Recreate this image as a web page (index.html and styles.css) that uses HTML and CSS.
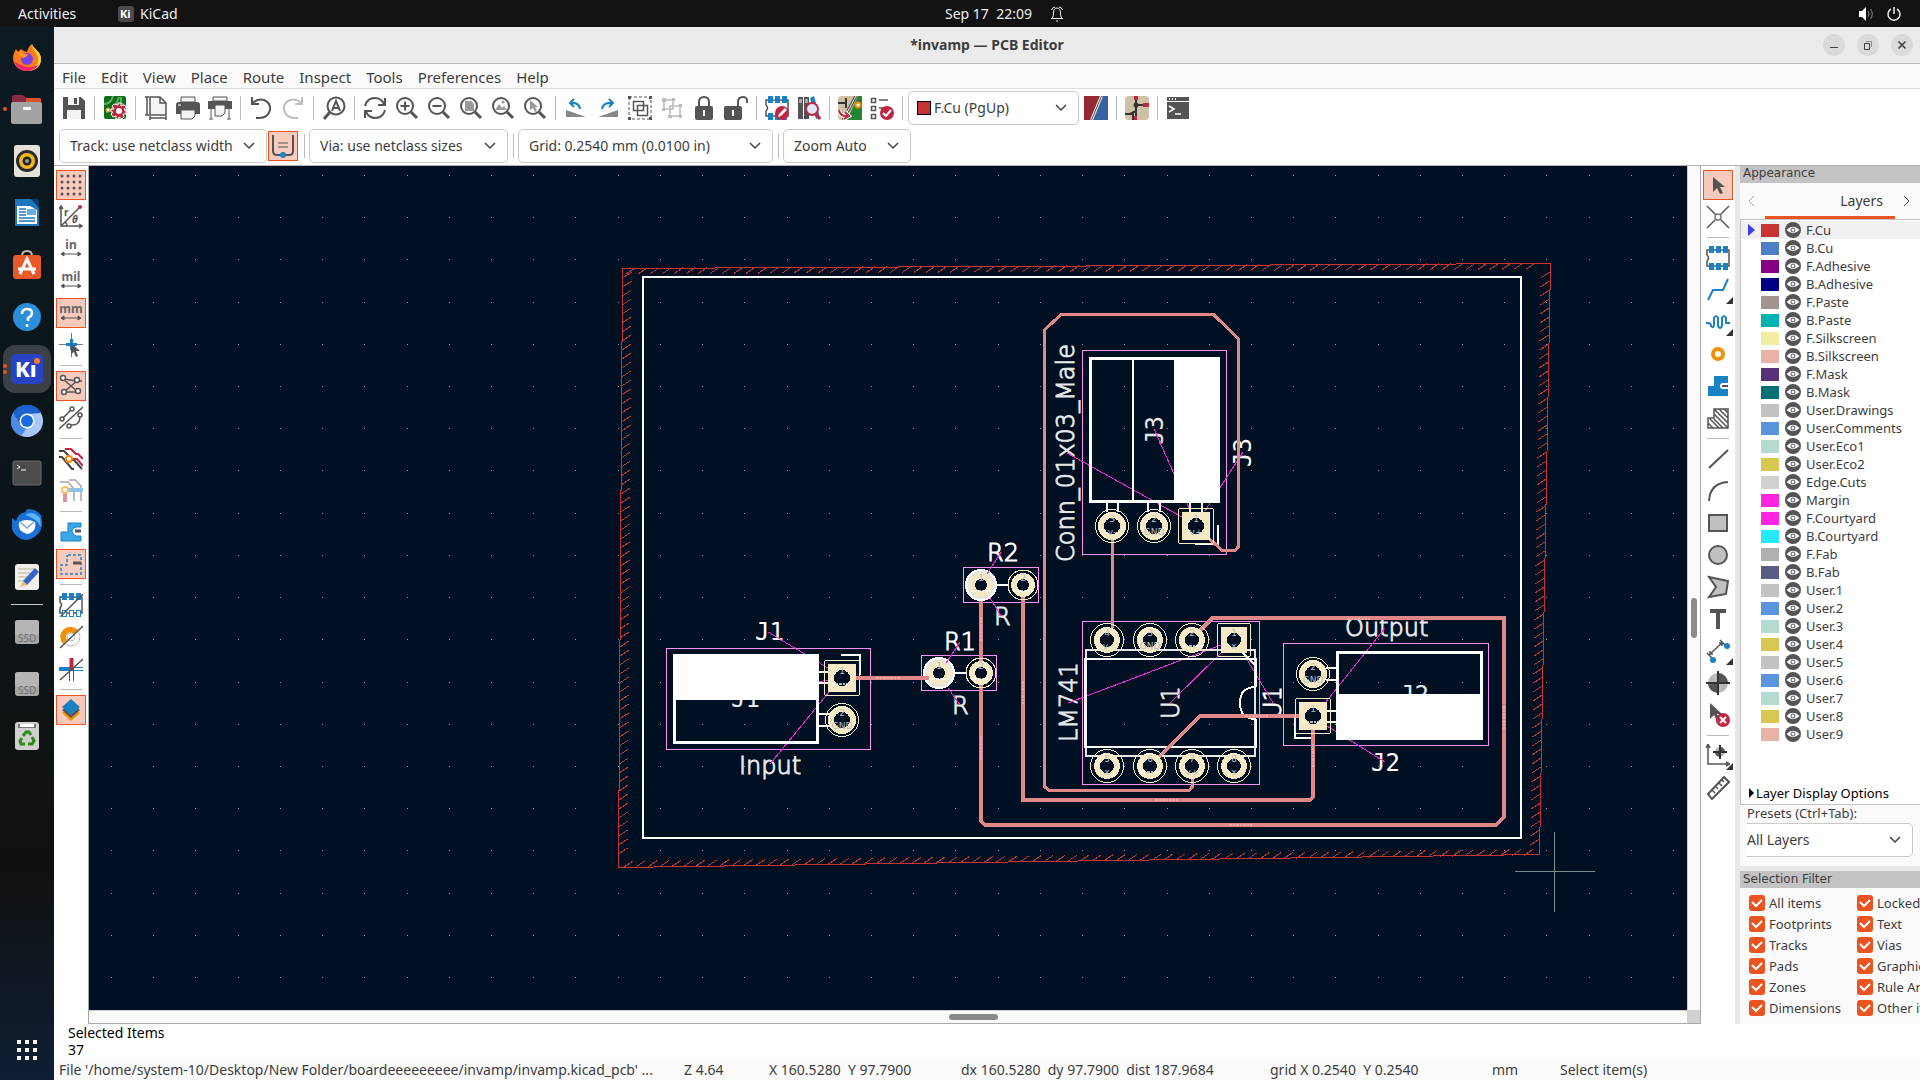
FILE: index.html
```html
<!DOCTYPE html>
<html lang="en">
<head>
<meta charset="utf-8">
<title>*invamp — PCB Editor</title>
<link rel="stylesheet" href="styles.css">
</head>
<body>
<svg class="defs" aria-hidden="true">
  <symbol id="eye" viewBox="0 0 16 16"><circle cx="8" cy="8" r="8" fill="#545454"/><path d="M1.500 8Q8 1.500 14.500 8Q8 14.500 1.500 8Z" fill="#fff"/><circle cx="8" cy="8" r="2" fill="#fff" stroke="#545454"/></symbol>
  <symbol id="lens" viewBox="0 0 24 24"><circle cx="10" cy="10" r="8" fill="#fff" stroke="#545454" stroke-width="2"/><path d="M16 16l6 6" stroke="#545454" stroke-width="3"/></symbol>
  <symbol id="chip" viewBox="0 0 24 24"><path d="M1 4h22v16H1v-5q3-3 0-6z" fill="#fff" stroke="#545454" stroke-width="1.500"/><path d="M3 0h5v7H3zM10 0h5v7h-5zM17 0h5v7h-5zM3 17h5v7H3zM10 17h5v7h-5zM17 17h5v7h-5z" fill="#1a81c4"/></symbol>
  <symbol id="arrow" viewBox="0 0 24 24"><path d="M7 4v15l4-4 3 6 3-1-3-6h5z" fill="#545454"/></symbol>
</svg>

<header class="topbar">
  <button class="activities">Activities</button>
  <span class="app"><svg width="16" height="16" viewBox="0 0 16 16"><rect width="16" height="16" rx="3" fill="#4a4a4a"/><text x="2" y="12" font-size="11" font-weight="700" fill="#fff">Ki</text></svg>KiCad</span>
  <span class="clock">Sep 17&nbsp; 22:09<svg width="16" height="16" viewBox="0 0 16 16" fill="none" stroke="#eee"><path d="M2 12.500h12M3.500 12q1-2 1-5Q4.500 2 8 2t3.500 5q0 3 1 5M7 15h2M2.500 4Q3.500 1 6 1M13.500 4Q12.500 1 10 1"/></svg></span>
  <span class="system"><svg width="16" height="16" viewBox="0 0 16 16"><path d="M1 5h3l4-4v14l-4-4H1z" fill="#fff"/><path d="M10 5q2 3 0 6M12.500 3q3.500 5 0 10" fill="none" stroke="#888"/></svg><svg width="16" height="16" viewBox="0 0 16 16"><path d="M5 3a6 6 0 1 0 6 0M8 1v7" fill="none" stroke="#eee" stroke-width="1.500"/></svg></span>
</header>

<div class="desktop">
<nav class="dock" aria-label="Dock">
  <button title="Firefox"><svg viewBox="0 0 32 32"><path d="M16 30C8 30 2 24 2 17c0-4 2-7 3-9l2 3 3-3 3 2 3 1c1-4 3-7 5-8 1 5 9 7 9 15s-6 12-14 12z" fill="#ff7a1c"/><path d="M21 3c1 5 9 7 9 15s-6 12-14 12c6-1 11-5 11-12 0-6-6-8-6-15z" fill="#ffd335"/><path d="M3 20q3 10 13 10 8 0 12-7-5 4-12 3T3 20z" fill="#f0246f"/><circle cx="16" cy="18" r="6" fill="#7542e5"/><path d="M6 10q5 4 11 3-1 3-5 4-3-1-6-7z" fill="#ff9a28"/></svg></button>
  <button title="Files" class="one"><svg viewBox="0 0 32 32"><path d="M1 4q0-2 2-2h9l3 3h13q2 0 2 2v6H1z" fill="#8a2b45"/><path d="M15 5h13q2 0 2 2v5H15z" fill="#d8552c"/><rect y="9" width="31" height="22" rx="2" fill="#a3a3a3"/><rect x="12" y="14" width="8" height="3" rx="1" fill="#fff"/></svg></button>
  <button title="Rhythmbox"><svg viewBox="0 0 32 32"><rect x="3" width="26" height="32" rx="3" fill="#e5e2da"/><circle cx="16" cy="16" r="11" fill="#2b2b2b"/><circle cx="16" cy="16" r="8" fill="#f2b91d"/><circle cx="16" cy="16" r="4.500" fill="#222"/><circle cx="16" cy="16" r="2" fill="#999"/></svg></button>
  <button title="LibreOffice Writer"><svg viewBox="0 0 32 32"><path d="M4 2h17l7 8v19H4z" fill="#1b76bc"/><path d="M6 9h13l7 4v14H6z" fill="#fff"/><path d="M20 2h8v9z" fill="#0c3c66"/><path d="M8 12h7M8 15h7M8 18h7M8 21h16M8 24h16" stroke="#1b76bc" stroke-width="1.500"/><path d="M16 12h9v6h-9z" fill="#68aee0"/></svg></button>
  <button title="Ubuntu Software"><svg viewBox="0 0 32 32"><path d="M11 7q0-5 5-5t5 5" fill="none" stroke="#c9b9a0" stroke-width="2"/><rect x="2" y="6" width="28" height="24" rx="3" fill="#e9582b"/><path d="M9 25l7-15 7 15M7 20h18" fill="none" stroke="#fff" stroke-width="3"/></svg></button>
  <button title="Help"><svg viewBox="0 0 32 32"><circle cx="16" cy="16" r="14" fill="#2a8fd8"/><path d="M11 13q0-5 5-5t5 4q0 3-4 5v3M16 23v3" fill="none" stroke="#fff" stroke-width="2.500"/></svg></button>
  <button title="KiCad" class="two"><svg viewBox="0 0 32 32"><rect y="1" width="32" height="30" rx="5" fill="#2743c4"/><text x="4" y="24" font-size="22" font-weight="800" fill="#fff">Kı</text><circle cx="26" cy="8" r="3" fill="#ff7b22"/></svg></button>
  <button title="Chromium"><svg viewBox="0 0 32 32"><circle cx="16" cy="16" r="16" fill="#a9c8fa"/><path d="M2 8a16 16 0 0 1 28 0L16 9 9 20z" fill="#1a62cf"/><path d="M2 8l7 12 7 3-6 8A16 16 0 0 1 2 8z" fill="#4c8be8"/><circle cx="16" cy="16" r="7.500" fill="#fff"/><circle cx="16" cy="16" r="6" fill="#1a6be0"/></svg></button>
  <button title="Terminal"><svg viewBox="0 0 32 32"><rect x="2" y="4" width="28" height="24" rx="2" fill="#4b4b4b" stroke="#6c6c6c"/><path d="M6 8l3 2-3 2M10 13h5" fill="none" stroke="#fff"/></svg></button>
  <button title="Thunderbird"><svg viewBox="0 0 32 32"><path d="M1 9l4 3q2-8 10-9-1-2 2-3 8 0 13 6 3 12-3 19-6 6-13 6Q4 29 1 20z" fill="#1c6fd6"/><path d="M14 6q8-5 15 3l1 9q-5-9-16-12z" fill="#5bb4f5"/><path d="M8 13q8-4 16 0 2 10-8 12-10-3-8-12z" fill="#fff"/><path d="M9 13l7 6 7-6" fill="none" stroke="#7aa7d8" stroke-width="1.500"/></svg></button>
  <button title="Text Editor"><svg viewBox="0 0 32 32"><rect x="4" y="3" width="24" height="26" rx="3" fill="#f0efeb"/><path d="M7 8h16M7 12h12M7 16h10M7 20h6" stroke="#b9b29d"/><path d="M12 20L24 7l4 4-12 13z" fill="#3664c9"/><path d="M12 20l4 4-7 2z" fill="#e9bd76"/></svg></button>
  <hr>
  <button title="SSD volume"><svg viewBox="0 0 32 32"><rect x="4" y="4" width="24" height="24" rx="3" fill="#a5a5a5"/><rect x="4" y="4" width="24" height="15" rx="3" fill="#b5b5b5"/><text x="7" y="26" font-size="10" fill="#707070">SSD</text></svg></button>
  <button title="Second SSD volume"><svg viewBox="0 0 32 32"><rect x="4" y="4" width="24" height="24" rx="3" fill="#a5a5a5"/><rect x="4" y="4" width="24" height="15" rx="3" fill="#b5b5b5"/><text x="7" y="26" font-size="10" fill="#707070">SSD</text></svg></button>
  <button title="Trash"><svg viewBox="0 0 32 32"><rect x="4" y="2" width="24" height="28" rx="3" fill="#cfcfcf"/><path d="M7 4h18v4H7z" fill="#777"/><path d="M9 4h14v3H9z" fill="#fff"/><path d="M12 16l3-4h3l2 3M21 17l2 4-2 3h-4M14 24h-4l-1-3 2-3" fill="none" stroke="#2c8a1c" stroke-width="3"/></svg></button>
  <button title="Show Applications" class="apps"><svg viewBox="0 0 32 32" fill="#fff"><path d="M6 6h4v4H6zM14 6h4v4h-4zM22 6h4v4h-4zM6 14h4v4H6zM14 14h4v4h-4zM22 14h4v4h-4zM6 22h4v4H6zM14 22h4v4h-4zM22 22h4v4h-4z"/></svg></button>
</nav>

<div class="window">
  <div class="titlebar">
    <h1>*invamp — PCB Editor</h1>
    <div class="controls">
      <button title="Minimize"><svg viewBox="0 0 22 22"><path d="M7 13.500h8"/></svg></button>
      <button title="Restore"><svg viewBox="0 0 22 22"><path d="M7.500 9.500h5v6h-5z"/><path d="M9 7.500h5.500V13" stroke="#888"/></svg></button>
      <button title="Close"><svg viewBox="0 0 22 22"><path d="M7.500 7.500l7 7M14.500 7.500l-7 7" stroke-width="1.500"/></svg></button>
    </div>
  </div>
  <nav class="menubar"><button>File</button><button>Edit</button><button>View</button><button>Place</button><button>Route</button><button>Inspect</button><button>Tools</button><button>Preferences</button><button>Help</button></nav>

  <div class="toolbars">
    <div class="bar">
      <button class="tool" title="Save"><svg viewBox="0 0 24 24"><path d="M1 1h18l4 4v18H1z" fill="#545454"/><path d="M6 1h11v8H6zM5 14h14v9H5z" fill="#f4f4f4"/><path d="M12 2h3v6h-3z" fill="#545454"/></svg></button>
      <i class="sep"></i>
      <button class="tool" title="Board Setup"><svg viewBox="0 0 24 24"><rect x="1" width="22" height="23" rx="2" fill="#0d6e1c"/><path d="M1 8q7 0 9-8M3 16q9-2 13-15M18 1v6l5 3" fill="none" stroke="#63ad5f" stroke-width="2"/><circle cx="5" cy="14" r="2" fill="#fff" stroke="#f29100"/><path d="M15 7h3v3l3-1 2 2-2 3h2v4h-3l1 3-2 2-3-2v2h-3v-3l-3 1-2-3 2-2H8v-3h3l-2-3 2-2 4 1z" fill="#bf2641" stroke="#fff"/><circle cx="16" cy="15" r="3" fill="#fff"/></svg></button>
      <i class="sep"></i>
      <button class="tool" title="Page Settings"><svg viewBox="0 0 24 24" fill="none" stroke="#545454" stroke-width="1.500"><path d="M6 1h10l6 6v12H6z" fill="#f4f4f4"/><path d="M16 1v6h6M3 1v18M1 1h4M1 19h4M6 22h16M6 20v4M22 20v4"/></svg></button>
      <button class="tool" title="Print"><svg viewBox="0 0 24 24"><path d="M5 1h14v5H5z" fill="#f4f4f4" stroke="#545454"/><path d="M3 6h18q3 0 3 3v9H0V9q0-3 3-3z" fill="#545454"/><path d="M5 14h14v6l-3 3H5z" fill="#f4f4f4" stroke="#545454"/><path d="M2 9h3" stroke="#fff"/></svg></button>
      <button class="tool" title="Plot"><svg viewBox="0 0 24 24"><path d="M5 1h14v4H5z" fill="#f4f4f4" stroke="#545454"/><path d="M0 5h24v8H0z" fill="#545454"/><path d="M7 9h10v8l-3 3H7z" fill="#f4f4f4" stroke="#545454"/><path d="M3 13v10M21 13v10M1 23h4M19 23h4" stroke="#545454"/></svg></button>
      <i class="sep"></i>
      <button class="tool" title="Undo"><svg viewBox="0 0 24 24" fill="none" stroke="#545454" stroke-width="2"><path d="M3 1v7h7M3 8q5-6 12-4 7 3 6 10-2 8-11 8H7"/></svg></button>
      <button class="tool" title="Redo"><svg viewBox="0 0 24 24" fill="none" stroke="#bdbdbd" stroke-width="2"><path d="M21 1v7h-7M21 8q-5-6-12-4-7 3-6 10 2 8 11 8h3"/></svg></button>
      <i class="sep"></i>
      <button class="tool" title="Find"><svg viewBox="0 0 24 24"><circle cx="14" cy="10" r="8.500" fill="#fff" stroke="#545454" stroke-width="2"/><path d="M8 16l-6 7" stroke="#545454" stroke-width="3"/><path d="M10 15l4-10 4 10M11.500 12h5" fill="none" stroke="#545454" stroke-width="2"/></svg></button>
      <i class="sep"></i>
      <button class="tool" title="Refresh"><svg viewBox="0 0 24 24" fill="none" stroke="#545454" stroke-width="2"><path d="M2 10Q4 2 12 2q6 0 9 6M22 2v7h-7M22 14q-2 8-10 8-6 0-9-6M2 22v-7h7"/></svg></button>
      <button class="tool" title="Zoom In"><svg viewBox="0 0 24 24"><use href="#lens"/><path d="M10 5.500v9M5.500 10h9" stroke="#545454" stroke-width="2"/></svg></button>
      <button class="tool" title="Zoom Out"><svg viewBox="0 0 24 24"><use href="#lens"/><path d="M5.500 10h9" stroke="#545454" stroke-width="2"/></svg></button>
      <button class="tool" title="Zoom to Fit"><svg viewBox="0 0 24 24"><use href="#lens"/><path d="M6 5h6l3 3v7H6z" fill="#9a9a9a"/></svg></button>
      <button class="tool" title="Zoom to Objects"><svg viewBox="0 0 24 24"><use href="#lens"/><path d="M4 14l4-6 3 4 2-2 3 4z" fill="#9a9a9a"/><circle cx="12" cy="6" r="1.500" fill="#9a9a9a"/></svg></button>
      <button class="tool" title="Zoom to Selection"><svg viewBox="0 0 24 24"><use href="#lens"/><path d="M7 4v10l3-2 2 4 2-1-2-4h3z" fill="#9a9a9a"/></svg></button>
      <i class="sep"></i>
      <button class="tool" title="Rotate Counterclockwise"><svg viewBox="0 0 24 24"><path d="M2 14l20 7H2z" fill="#888"/><path d="M10 3L6 7l4 4M6 7q9-1 10 6" fill="none" stroke="#1a81c4" stroke-width="2"/></svg></button>
      <button class="tool" title="Rotate Clockwise"><svg viewBox="0 0 24 24"><path d="M22 14v7H2z" fill="#888"/><path d="M13 3l4 4-4 4M17 7q-10-1-11 6" fill="none" stroke="#1a81c4" stroke-width="2"/></svg></button>
      <button class="tool" title="Group"><svg viewBox="0 0 24 24" fill="none" stroke="#545454"><path d="M1 1h22v22H1z" stroke-dasharray="3 2"/><path d="M5.500 5.500h10v9h-10zM9.500 9.500h10v10h-10z" stroke-width="1.500"/><path d="M0 0h3v3H0zM21 0h3v3h-3zM0 21h3v3H0zM21 21h3v3h-3z" fill="#545454" stroke="none"/></svg></button>
      <button class="tool" title="Ungroup"><svg viewBox="0 0 24 24" fill="none" stroke="#bbb" stroke-width="1.500"><path d="M4 4h9v9H4zM10 10h10v10H10z"/><path d="M2 2h4v4H2zM12 2h3v3h-3zM2 12h3v3H2zM8 19h4v3H8zM19 8h3v3h-3zM19 19h3v3h-3z" fill="#bbb" stroke="none"/></svg></button>
      <button class="tool" title="Lock"><svg viewBox="0 0 24 24"><path d="M7 11V6q0-5 5-5t5 5v5" fill="none" stroke="#545454" stroke-width="2"/><rect x="3" y="10" width="18" height="14" rx="2" fill="#545454"/><path d="M12 14v6" stroke="#fff" stroke-width="2"/></svg></button>
      <button class="tool" title="Unlock"><svg viewBox="0 0 24 24"><path d="M14 11V6q0-5 5-5t4 6" fill="none" stroke="#545454" stroke-width="2"/><rect y="10" width="18" height="14" rx="2" fill="#545454"/><path d="M9 14v6" stroke="#fff" stroke-width="2"/></svg></button>
      <i class="sep"></i>
      <button class="tool" title="Footprint Editor"><svg viewBox="0 0 24 24"><use href="#chip"/><circle cx="17" cy="17" r="7" fill="#bf2641"/><path d="M13 21l1-3 6-6 2 2-6 6z" fill="#fff"/></svg></button>
      <button class="tool" title="Footprint Libraries"><svg viewBox="0 0 24 24"><path d="M1 1h5v22H1zM7 1h5v22H7z" fill="#545454"/><path d="M13 2l4-2 6 22-4 1z" fill="#1a81c4"/><path d="M2 4h3M2 6h3M8 4h3M8 6h3" stroke="#fff"/><circle cx="15" cy="13" r="6" fill="#dceaf5" stroke="#bf2641" stroke-width="2"/><path d="M19 18l4 5" stroke="#bf2641" stroke-width="3"/></svg></button>
      <i class="sep"></i>
      <button class="tool" title="Update from Schematic"><svg viewBox="0 0 24 24"><rect width="24" height="24" rx="4" fill="#cfc1a5"/><path d="M20 0h4v24H9z" fill="#278434"/><path d="M18 0L5 24" stroke="#444" stroke-width="3"/><path d="M18 0L5 24" stroke="#fff"/><path d="M0 7h8M8 2v10" stroke="#333" stroke-width="2"/><circle cx="20" cy="9" r="2.500" fill="#fff" stroke="#f29100" stroke-width="2"/><path d="M1 14q1 7 9 6M7 16l4 4-5 3" fill="none" stroke="#fff" stroke-width="4"/><path d="M1 14q1 7 9 6M7 16l4 4-5 3" fill="none" stroke="#bf2641" stroke-width="2"/></svg></button>
      <button class="tool" title="Design Rules Checker"><svg viewBox="0 0 24 24"><path d="M1.500 2.500h4v4h-4zM1.500 10.500h4v4h-4zM1.500 18.500h4v4h-4zM9 4h9M9 12h5" fill="none" stroke="#545454" stroke-width="1.500"/><circle cx="17" cy="17" r="7" fill="#bf2641"/><path d="M13 17l3 3 5-6" fill="none" stroke="#fff" stroke-width="2"/></svg></button>
      <i class="sep"></i>
      <span class="layerpick"><span class="chip"></span><select aria-label="Active layer" class="w-layer"><option>F.Cu (PgUp)</option></select></span>
      <button class="tool" title="Layer Pair"><svg viewBox="0 0 24 24"><path d="M0 0h24v24H0z" fill="#38629f"/><path d="M0 0h18L7 24H0z" fill="#962831"/><path d="M17.500 0l-10 24" stroke="#eee" stroke-width="3"/><path d="M17.500 0l-10 24" stroke="#555"/></svg></button>
      <i class="sep"></i>
      <button class="tool" title="Open Schematic"><svg viewBox="0 0 24 24"><rect width="24" height="24" rx="4" fill="#cfc1a5"/><path d="M11 0v9M11 9v6l-6 3M11 9h7M0 18h8v6M11 15v9" fill="none" stroke="#333" stroke-width="2"/><circle cx="11" cy="9" r="2.500" fill="#333"/><path d="M9 0h4v4H9zM18 7h6v4h-6zM9 20h3v4H9z" fill="#bf2641"/></svg></button>
      <i class="sep"></i>
      <button class="tool" title="Scripting Console"><svg viewBox="0 0 24 24"><path d="M1 1h22v4H1zM1 6h22v17H1z" fill="#545454"/><path d="M3 3h1M6 3h1M9 3h1" stroke="#fff" stroke-width="2"/><path d="M3 10l5 3-5 3M9 18h6" fill="none" stroke="#fff" stroke-width="1.500"/></svg></button>
    </div>
    <div class="bar second">
      <select aria-label="Track width" class="w-track"><option>Track: use netclass width</option></select>
      <button class="tool on" title="Use existing track width"><svg viewBox="0 0 24 24" fill="none" stroke="#545454" stroke-width="2"><path d="M2 1v16q0 4 4 4h12q4 0 4-4V1"/><path d="M7 9h10M7 13h10" stroke-width="1"/><circle cx="12" cy="21" r="3" fill="#1a81c4" stroke="none"/></svg></button>
      <i class="sep"></i>
      <select aria-label="Via size" class="w-via"><option>Via: use netclass sizes</option></select>
      <i class="sep"></i>
      <select aria-label="Grid" class="w-grid"><option>Grid: 0.2540 mm (0.0100 in)</option></select>
      <i class="sep"></i>
      <select aria-label="Zoom" class="w-zoom"><option>Zoom Auto</option></select>
    </div>
  </div>

  <main class="work">
    <div class="side">
      <button class="tool on" title="Show grid"><svg viewBox="0 0 24 24"><path d="M3 3h19M3 9h19M3 15h19M3 21h19" stroke="#545454" stroke-width="3" stroke-linecap="round" stroke-dasharray="0 6"/></svg></button>
      <button class="tool" title="Polar coordinates"><svg viewBox="0 0 24 24" fill="none" stroke="#545454" stroke-width="1.500"><path d="M2 2v19h21M2 21L20 3M0 4l2-3 2 3M20 19l3 2-3 2M6 17q2 1 2 4"/><circle cx="21" cy="2" r="2" fill="#bf2641" stroke="none"/><text x="5" y="11" font-size="10" font-weight="700" fill="#545454" stroke="none">r</text><text x="13" y="18" font-size="10" font-style="italic" font-weight="700" fill="#545454" stroke="none">θ</text></svg></button>
      <button class="tool unit" title="Inches"><svg viewBox="0 0 24 24"><text x="12" y="12" text-anchor="middle">in</text><path d="M3 17h18M5 15l-3 2 3 2zM19 15l3 2-3 2z"/></svg></button>
      <button class="tool unit" title="Mils"><svg viewBox="0 0 24 24"><text x="12" y="12" text-anchor="middle">mil</text><path d="M3 17h18M5 15l-3 2 3 2zM19 15l3 2-3 2z"/></svg></button>
      <button class="tool unit on" title="Millimeters"><svg viewBox="0 0 24 24"><text x="12" y="12" text-anchor="middle">mm</text><path d="M3 17h18M5 15l-3 2 3 2zM19 15l3 2-3 2z"/></svg></button>
      <button class="tool" title="Full-window crosshairs"><svg viewBox="0 0 24 24"><path d="M0 11.500h24M12.500 0v24" stroke="#777"/><path d="M7 11.500h11M12.500 6v11" stroke="#1a81c4" stroke-width="3"/><path d="M12 10v11l3-2 2 5 2-1-2-5h4z" fill="#545454"/></svg></button>
      <hr>
      <button class="tool on" title="Show ratsnest"><svg viewBox="0 0 24 24" fill="#fff" stroke="#545454" stroke-width="1.500"><path d="M4 5l15 13M5 18L18 7" fill="none"/><path d="M4 5l14 2h5M5 18h14" fill="none"/><circle cx="4" cy="4" r="2.500"/><circle cx="18" cy="6" r="2.500"/><circle cx="5" cy="18" r="2.500"/><circle cx="19" cy="17" r="2.500"/></svg></button>
      <button class="tool" title="Curved ratsnest"><svg viewBox="0 0 24 24" fill="none" stroke="#545454" stroke-width="1.500"><path d="M0 23L24 1M4 12l8-8M12 19q9 1 9-9"/><circle cx="3" cy="13" r="2"/><circle cx="13" cy="3" r="2"/><circle cx="10" cy="20" r="2"/><circle cx="21" cy="9" r="2"/></svg></button>
      <hr>
      <button class="tool" title="High contrast"><svg viewBox="0 0 24 24" fill="none" stroke-width="2"><path d="M0 4h5l5 5M0 10h3l10 12h2M12 13h3l8 9" stroke="#444"/><path d="M6 2h6l5 5h2l5 5M12 12h6l6 7" stroke="#bf2641"/><circle cx="10" cy="12" r="3" fill="#fff" stroke="#f29100"/></svg></button>
      <button class="tool" title="Net highlighting"><svg viewBox="0 0 24 24" fill="none" stroke="#bbb" stroke-width="2"><path d="M1 3h8l6 7v12M10 1h6l6 6v15"/><path d="M7 11h17" stroke="#8cc5ea" stroke-width="4"/><path d="M6 13v10" stroke="#e58e9c" stroke-width="4"/><circle cx="6" cy="11" r="3" fill="#fff" stroke="#f7bd6b"/></svg></button>
      <hr>
      <button class="tool" title="Zone fill"><svg viewBox="0 0 24 24"><path d="M9 3h13v4h-5q-4 1-4 4t4 5h5v5H2v-9h7z" fill="#38a9e4" stroke="#1a81c4"/><path d="M16 11h6" stroke="#545454" stroke-width="3"/></svg></button>
      <button class="tool on" title="Zone outlines"><svg viewBox="0 0 24 24"><path d="M9 3h13v19H2v-9h6V3" fill="none" stroke="#1a81c4" stroke-width="1.500" stroke-dasharray="3 2"/><path d="M14 11h8" stroke="#545454" stroke-width="3"/></svg></button>
      <hr>
      <button class="tool" title="Sketch pads"><svg viewBox="0 0 24 24"><use href="#chip"/><path d="M4 18h3v5H4zM11 18h3v5h-3zM18 18h3v5h-3z" fill="#fff"/><path d="M1 24L24 1" stroke="#545454" stroke-width="1.500"/></svg></button>
      <button class="tool" title="Sketch vias"><svg viewBox="0 0 24 24" fill="none"><circle cx="12" cy="12" r="9" stroke="#bbb"/><path d="M4 19A9 9 0 1 1 19 5l-4 4a4 4 0 0 0-7 6z" fill="#f29100"/><circle cx="12" cy="12" r="4" fill="#fff" stroke="#bbb"/><path d="M1 23L24 1" stroke="#545454" stroke-width="1.500"/></svg></button>
      <button class="tool" title="Sketch tracks"><svg viewBox="0 0 24 24"><path d="M0 12h12" stroke="#1a81c4" stroke-width="4"/><path d="M12 10.500h12M12 13.500h12" stroke="#1a81c4"/><path d="M12.500 1v12" stroke="#bf2641" stroke-width="4"/><path d="M10.500 12v12M14.500 12v12" stroke="#bf2641"/><path d="M1 23L24 2" stroke="#545454" stroke-width="1.500"/></svg></button>
      <hr>
      <button class="tool on" title="Show layers manager"><svg viewBox="0 0 24 24"><path d="M3 15l9-7 9 7-9 8z" fill="#f29100"/><path d="M3 12l9-7 9 7-9 8z" fill="#545454"/><path d="M3 9l9-8 9 8-9 8z" fill="#1a81c4"/></svg></button>
    </div>

    <div class="canvas">
      <svg class="board" viewBox="89 166 1598 844" preserveAspectRatio="xMidYMid slice" role="img" aria-label="Circuit board layout">
        <path id="grid" stroke="#8c969e"/>
        <path id="hatch" fill="none" stroke="#c83434"/>
        <path d="M622.500 268.500L1550.500 263.500 1539.500 854.500 618.500 867.500z" fill="none" stroke="#c83434"/>
        <path d="M643 277h878v561H643z" fill="none" stroke="#fff" stroke-width="2"/>
        <g class="yard"><path d="M666.500 648.500h204v101h-204zM921.500 655.500h75v35h-75zM963.500 567.500h75v35h-75zM1082.500 350.500h144v204h-144zM1082.500 621.500h177v163h-177zM1283.500 643.500h205v102h-205z"/></g>
        <g class="label dim">
          <text x="994" y="625">R</text><text x="952" y="714">R</text>
          <text x="739" y="774">Input</text><text x="1345" y="636">Output</text>
          <text class="mono" x="731" y="707">J1</text><text class="mono" x="1400" y="703">J2</text>
          <text transform="translate(1074 562) rotate(-90)">Conn_01x03_Male</text>
          <text class="mono" transform="translate(1163 445) rotate(-90)">J3</text>
          <text transform="translate(1077 742) rotate(-90)">LM741</text>
          <text transform="translate(1179 719) rotate(-90)">U1</text>
        </g>
        <g class="label">
          <text x="987" y="561">R2</text><text x="944" y="650">R1</text><text class="mono" x="755" y="640">J1</text><text class="mono" x="1371" y="771">J2</text>
          <text class="mono" transform="translate(1251 467) rotate(-90)">J3</text>
          <text transform="translate(1281 719) rotate(-90)">U1</text>
        </g>
        <g class="link"><path d="M1067 453L1182 517M1154 429L1190 510M1243 452L1205 511M1068 703L1221 645M1170 703L1221 653M1243 653L1273 703M1385 628L1325 703M1385 762L1327 726M1325 711h12M768 632L828 668M770 764L829 692M818 682L828 680"/></g>
        <g class="silk">
          <path d="M1086 650h169v106h-169z" stroke="#e6e6e6"/>
          <path d="M1256 719v28h-171v-88h171v28M1256 687q-16 0-16 16t16 16M1243 653l13 13" />
          <path d="M1133 359v141M1107 502v10M1118 502v10M1148 502v10M1160 502v10M1190 502v10M1202 502v10"/>
          <path d="M1090 358h128v143h-128zM1337 652h144v86h-144zM674 655h143v87H674z" stroke-width="3"/>
          <path d="M1218 525v19h-23M1295 718v20h17M841 655h19v20M997 585h11M955 673h12M1326 668h10M1326 680h10M1326 711h10M1326 722h10M818 672h12M818 683h12M818 714h12M818 726h12"/>
          <path d="M1174 357h45v145h-45zM1336 694h146v45h-146zM673 654h145v46H673z" fill="#fff" stroke="none"/>
        </g>
        <g class="track">
          <path stroke-width="3" d="M1196 526L1222 550.500h13l3.500-4V339L1213.500 314.500H1061L1044.500 330V786.500l4.500 4h140l3.500-4V766M1112.500 526V627l-5 12"/>
          <path stroke-width="4" d="M981 585V821l4 4H1496l8-8V617.500H1213L1192 638M1023 585V800h287l3-3V716H1200L1150 766"/>
        </g>
        <g id="pads"></g>
        <path class="track" stroke-width="4" d="M856 678h73"/>
        <g class="link"><path d="M1001 552L987 574M990 598l11 18M960 642L946 663M948 688l12 17"/></g>
        <path stroke="#f2bcbc" stroke-dasharray="3 1 2 1" stroke-width="2" opacity=".6" d="M1347 618.500h23M1245 716h23M1155 800h23M1229 825h23M876 678h24M981 617v24M981 736v24M1023 681v23M1313 744v23M1504 706v23"/>
        <path d="M1515 871.500h80M1554.500 832v80" stroke="#7f878f"/>
      </svg>
      <div class="vscroll"><span></span></div>
      <div class="hscroll"><span></span></div>
      <div class="corner"></div>
    </div>

    <div class="side right">
      <button class="tool on" title="Select"><svg viewBox="0 0 24 24"><use href="#arrow"/></svg></button>
      <button class="tool" title="Local ratsnest"><svg viewBox="0 0 24 24" fill="none" stroke="#545454" stroke-width="1.500"><path d="M1 1l22 22M23 1L1 23"/><circle cx="12" cy="12" r="3" fill="#fff" stroke="#777"/></svg></button>
      <hr>
      <button class="tool" title="Add footprint"><svg viewBox="0 0 24 24"><use href="#chip"/></svg></button>
      <button class="tool more" title="Route tracks"><svg viewBox="0 0 24 24"><path d="M2 22L7 12h10l5-11" fill="none" stroke="#1a81c4" stroke-width="2"/></svg></button>
      <button class="tool more" title="Tune length"><svg viewBox="0 0 24 24"><path d="M0 13h2q3 0 3 3 3 3 3-2V8q2-4 4 0v8q2 4 4 0V8q2-4 4 0v5h4" fill="none" stroke="#1a81c4" stroke-width="2"/></svg></button>
      <button class="tool" title="Add via"><svg viewBox="0 0 24 24"><circle cx="12" cy="12" r="5" fill="none" stroke="#f29100" stroke-width="4"/></svg></button>
      <button class="tool" title="Add zone"><svg viewBox="0 0 24 24"><path d="M8 2h14v7h-5q-3 0-3 3t3 3h5v7H2V12h6z" fill="#1a81c4"/><path d="M16 12h6" stroke="#545454" stroke-width="2"/></svg></button>
      <button class="tool" title="Add rule area"><svg viewBox="0 0 24 24" fill="none" stroke="#545454" stroke-width="1.500"><path d="M8 3h14v19H2V12h6zM8 3l14 14M13 3l9 9M18 3l4 4M8 8l14 14M8 13l9 9M4 13l9 9M2 17l5 5" /></svg></button>
      <hr>
      <button class="tool" title="Draw line"><svg viewBox="0 0 24 24"><path d="M3 21L22 3" stroke="#545454" stroke-width="2"/></svg></button>
      <button class="tool" title="Draw arc"><svg viewBox="0 0 24 24"><path d="M3 22Q4 4 22 3" fill="none" stroke="#545454" stroke-width="2"/></svg></button>
      <button class="tool" title="Draw rectangle"><svg viewBox="0 0 24 24"><path d="M3 4h18v16H3z" fill="#c0c0c0" stroke="#545454" stroke-width="2"/></svg></button>
      <button class="tool" title="Draw circle"><svg viewBox="0 0 24 24"><circle cx="12" cy="12" r="9" fill="#c0c0c0" stroke="#545454" stroke-width="2"/></svg></button>
      <button class="tool" title="Draw polygon"><svg viewBox="0 0 24 24"><path d="M3 2l19 4-2 13-17 3 7-10z" fill="#c0c0c0" stroke="#545454" stroke-width="2"/></svg></button>
      <button class="tool" title="Add text"><svg viewBox="0 0 24 24"><path d="M4 4h16M12 4v18" stroke="#545454" stroke-width="4"/></svg></button>
      <button class="tool more" title="Add dimension"><svg viewBox="0 0 24 24"><path d="M1 14l8 8M14 1l8 8M4 15L16 4M4 12v3h3M13 4h3v3" fill="none" stroke="#545454" stroke-width="1.500"/><circle cx="7" cy="21" r="3" fill="#1a81c4"/><circle cx="21" cy="7" r="3" fill="#1a81c4"/></svg></button>
      <button class="tool" title="Layer alignment target"><svg viewBox="0 0 24 24"><circle cx="12" cy="12" r="10" fill="#b9b9b9"/><path d="M12 12V2a10 10 0 0 1 10 10zM12 12v10A10 10 0 0 1 2 12z" fill="#545454"/><path d="M12 0v24M0 12h24" stroke="#333" stroke-width="2"/></svg></button>
      <button class="tool" title="Delete"><svg viewBox="0 0 24 24"><path d="M4 0v16l4-4 3 6 3-1-3-6h5z" fill="#545454"/><circle cx="17" cy="17" r="7" fill="#bf2641"/><path d="M14 14l6 6M20 14l-6 6" stroke="#fff" stroke-width="2"/></svg></button>
      <hr>
      <button class="tool more" title="Grid origin"><svg viewBox="0 0 24 24"><path d="M2 2v18h20M0 4l2-4 2 4M20 18l4 2-4 2" fill="none" stroke="#545454" stroke-width="1.500"/><circle cx="14" cy="8" r="5" fill="#b9b9b9"/><path d="M14 8V3a5 5 0 0 1 5 5zM14 8v5a5 5 0 0 1-5-5z" fill="#545454"/><path d="M14 1v14M7 8h14" stroke="#333" stroke-width="2"/></svg></button>
      <button class="tool" title="Measure"><svg viewBox="0 0 24 24"><path d="M2 18L18 1l5 5L6 23z" fill="none" stroke="#545454" stroke-width="2"/><path d="M6 14l3 3M10 11l2 2M13 7l3 3M16 4l2 2" stroke="#545454" stroke-width="1.500"/></svg></button>
    </div>

    <aside class="panel">
      <h2>Appearance</h2>
      <div class="tabs"><button title="Previous tab"><svg viewBox="0 0 8 12"><path d="M6 1L1 6l5 5" stroke="#aaa"/></svg></button><button class="tab">Layers</button><button title="Next tab"><svg viewBox="0 0 8 12"><path d="M1 1l5 5-5 5" stroke="#444"/></svg></button></div>
      <div class="layers"><ul id="layers"></ul><button class="expand"><svg viewBox="0 0 5 10"><path d="M0 0l5 5-5 5z"/></svg>Layer Display Options</button></div>
      <div class="presets"><label for="preset">Presets (Ctrl+Tab):</label><select id="preset"><option>All Layers</option></select></div>
      <h2 class="gap">Selection Filter</h2>
      <div class="filter">
        <label><input type="checkbox" checked>All items</label><label><input type="checkbox" checked>Locked items</label>
        <label><input type="checkbox" checked>Footprints</label><label><input type="checkbox" checked>Text</label>
        <label><input type="checkbox" checked>Tracks</label><label><input type="checkbox" checked>Vias</label>
        <label><input type="checkbox" checked>Pads</label><label><input type="checkbox" checked>Graphics</label>
        <label><input type="checkbox" checked>Zones</label><label><input type="checkbox" checked>Rule Areas</label>
        <label><input type="checkbox" checked>Dimensions</label><label><input type="checkbox" checked>Other items</label>
      </div>
    </aside>
  </main>

  <div class="message"><span>Selected Items</span><span>37</span></div>
  <footer class="status">
    <span>File '/home/system-10/Desktop/New Folder/boardeeeeeeeee/invamp/invamp.kicad_pcb' ...</span>
    <span>Z 4.64</span><span>X 160.5280&nbsp; Y 97.7900</span><span>dx 160.5280&nbsp; dy 97.7900&nbsp; dist 187.9684</span><span>grid X 0.2540&nbsp; Y 0.2540</span><span>mm</span><span>Select item(s)</span>
  </footer>
</div>
</div>
<script src="script.js"></script>
</body>
</html>
```
FILE: styles.css
```css
* { box-sizing: border-box; }
body {
  margin: 0;
  min-height: 100vh;
  display: flex;
  flex-direction: column;
  background: #fff;
  color: #3d3d3d;
  font: 14px/18px "Noto Sans", "Open Sans", sans-serif;
  overflow-x: hidden;
}
button { border: 0; padding: 0; background: none; color: inherit; font: inherit; }
svg { display: block; flex: none; }
ul { margin: 0; padding: 0; list-style: none; }
.defs { position: absolute; width: 0; height: 0; }

.topbar {
  display: grid;
  grid-template-columns: 100px 1fr auto 1fr 100px;
  align-items: center;
  height: 27px;
  padding: 0 18px;
  background: #131313;
  color: #eee;
}
.activities { text-align: left; }
.app, .clock, .system { display: flex; align-items: center; gap: 6px; }
.clock { gap: 17px; padding-left: 90px; }
.system { grid-column: 5; justify-content: flex-end; gap: 12px; }

.desktop { flex: 1; display: flex; min-height: 0; }
.dock {
  width: 54px;
  flex: none;
  display: flex;
  flex-direction: column;
  padding: 4px 0;
  background: linear-gradient(#0d1a22, #0b1519 45%, #101010 80%, #0e1f33);
}
.dock button { position: relative; height: 52px; padding: 10px 11px; }
.dock svg { width: 32px; height: 32px; }
.dock hr { width: 32px; height: 1px; margin: 1px auto; border: 0; background: #d0d0d0; }
.dock .apps { margin-top: auto; }
.dock .two { height: 48px; margin: 2px 3px; padding: 8px; border-radius: 12px; background: #3b4044; }
.dock .one::before, .dock .two::before {
  content: "";
  position: absolute;
  left: 3px;
  top: 24px;
  width: 4px;
  height: 4px;
  border-radius: 2px;
  background: #e95420;
}
.dock .two::before { left: 0; top: 19px; box-shadow: 0 6px #e95420; }

.window { flex: 1; min-width: 0; display: flex; flex-direction: column; }
.titlebar {
  display: grid;
  grid-template-columns: 1fr auto 1fr;
  align-items: center;
  height: 37px;
  border-bottom: 1px solid #b9b9b9;
  background: #ebebeb;
}
.titlebar h1 { grid-column: 2; margin: 0; font-size: 14px; line-height: 18px; }
.controls { display: flex; justify-content: flex-end; gap: 12px; padding-right: 7px; }
.controls button { width: 22px; height: 22px; border-radius: 11px; background: #dadada; }
.controls svg { fill: none; stroke: #3d3d3d; }

.menubar { display: flex; height: 25px; padding-top: 1px; border-bottom: 1px solid #dedede; background: #fafafa; font-size: 15px; }
.menubar button { padding: 0 7px 0 8px; }

.toolbars { border-bottom: 1px solid #b0b0b0; }
.bar { display: flex; align-items: center; height: 38px; padding-left: 4px; }
.second { padding-left: 5px; }
.sep { width: 9px; height: 24px; background: linear-gradient(#bbb, #bbb) center / 1px 24px no-repeat; }
.second .sep { width: 10px; }
.tool { position: relative; width: 30px; height: 30px; margin: 1px; padding: 2px; border: 1px solid transparent; flex: none; }
.tool svg { width: 24px; height: 24px; }
.on { background: #f8cabc; border-color: #e95420; }
.more::after {
  content: "";
  position: absolute;
  right: -1px;
  bottom: 0;
  border-left: 7px solid transparent;
  border-bottom: 7px solid #333;
}
.unit text { font-size: 12px; font-weight: 700; fill: #666; }
.unit path { fill: #545454; stroke: #545454; }

select {
  appearance: none;
  height: 34px;
  padding: 0 10px;
  border: 1px solid #c9c9c9;
  border-radius: 5px;
  color: inherit;
  font: inherit;
  background: #fff url("data:image/svg+xml,%3Csvg xmlns='http://www.w3.org/2000/svg' width='12' height='8'%3E%3Cpath d='M1 1l5 5 5-5' fill='none' stroke='%23444' stroke-width='1.500'/%3E%3C/svg%3E") right 11px center no-repeat;
}
.w-track { width: 208px; }
.w-via { width: 199px; }
.w-grid { width: 255px; }
.w-zoom { width: 128px; }
.w-layer { width: 171px; padding-left: 25px; }
.layerpick { position: relative; margin: 0 1px; }
.layerpick .chip { position: absolute; left: 9px; top: 10px; width: 14px; height: 14px; border: 1px solid #000; background: #c83434; }

.work { flex: 1; min-height: 0; display: flex; background: #e8e8e8; }
.side { width: 34px; flex: none; padding: 3px 1px 0; background: #fff; }
.side hr { width: 22px; height: 1px; margin: 4px auto; border: 0; background: #b9b9b9; }
.canvas {
  flex: 1;
  min-width: 0;
  display: grid;
  grid-template: minmax(0, 1fr) 13px / minmax(0, 1fr) 13px;
  border: 1px solid #a9a9a9;
  border-top: 0;
  background: #fafafa;
}
.board { width: 100%; height: 100%; background: #001023; shape-rendering: crispEdges; }
.vscroll { border-left: 1px solid #d0d0d0; display: flex; justify-content: center; align-items: center; padding-top: 60px; }
.vscroll span { width: 6px; height: 40px; border-radius: 3px; background: #8a8a8a; }
.hscroll { border-top: 1px solid #d0d0d0; display: flex; justify-content: center; align-items: center; padding-left: 170px; }
.hscroll span { width: 49px; height: 6px; border-radius: 3px; background: #8a8a8a; }
.corner { background: #d2d2d2; }

.label text { font: 200 24px "DejaVu Sans", sans-serif; fill: #fff; stroke: #fff; stroke-width: 1px; }
.label.dim text { fill: #e6e6e6; stroke: #e6e6e6; }
.label .mono, .label.dim .mono { font: 400 24px "DejaVu Sans Mono", monospace; stroke: none; }
.yard path { fill: none; stroke: #ff92f0; }
.link path { fill: none; stroke: #ff26e2; }
.silk path { fill: none; stroke: #fff; stroke-width: 2; }
.silk path[stroke-width="3"] { stroke-width: 3; }
.silk path[stroke="#e6e6e6"] { stroke: #e6e6e6; }
.silk path[fill="#fff"] { fill: #fff; stroke: none; }
.track { fill: none; stroke: #e08888; }
.pad { fill: #f7e9c5; }
.ring { fill: none; stroke: #f7e9c5; }
.hole { fill: #001023; }
.padtext { font: 9px "DejaVu Sans", sans-serif; fill: #b4bfc6; text-anchor: middle; }

.panel { width: 180px; flex: none; margin-left: 5px; display: flex; flex-direction: column; overflow: hidden; background: #fafafa; }
.panel h2 { margin: 0; padding: 0 3px; height: 17px; font: 12px/14px "DejaVu Sans", "Noto Sans", sans-serif; background: #c3c3c3; }
.panel h2.gap { height: 22px; border-top: 5px solid #e8e8e8; line-height: 16px; }
.tabs { display: flex; height: 37px; border-bottom: 1px solid #c3c3c3; }
.tabs button:not(.tab) { width: 25px; padding: 0 8px; }
.tabs svg { width: 8px; height: 12px; fill: none; }
.tab { flex: 1; padding: 3px 12px 0 0; border-bottom: 3px solid #e95420; text-align: right; }
.layers { flex: 1; display: flex; flex-direction: column; padding-top: 1px; border: 1px solid #c3c3c3; border-width: 0 0 1px 1px; background: #fff; font-size: 13px; }
.layers li { display: flex; align-items: center; height: 18px; padding-left: 20px; }
.layers li:first-child { position: relative; background: #f0f0f0; }
.layers li:first-child::before { content: ""; position: absolute; left: 7px; top: 3px; border: 6px solid transparent; border-left: 7px solid #3b3bff; border-right: 0; }
.swatch { width: 18px; height: 13px; margin-right: 6px; }
.layers li button { margin-right: 5px; }
.layers li svg { width: 16px; height: 16px; }
.expand { display: flex; align-items: center; gap: 2px; margin-top: auto; padding: 2px 8px; color: #000; }
.expand svg { width: 5px; height: 10px; }
.presets { display: flex; flex-direction: column; padding: 0 7px 9px; font-size: 13px; }
.presets label { line-height: 17px; }
.presets select { width: 166px; margin-top: 1px; padding: 0; border-left: 0; border-radius: 0 5px 5px 0; font-size: 14px; }
.filter { display: grid; grid-template-columns: 108px 130px; padding: 4px 9px 6px; font-size: 13px; }
.filter label { display: flex; align-items: center; gap: 4px; height: 21px; white-space: nowrap; }
.filter input {
  appearance: none;
  width: 16px;
  height: 16px;
  margin: 0;
  border-radius: 3px;
  background: #e95420 url("data:image/svg+xml,%3Csvg xmlns='http://www.w3.org/2000/svg' width='12' height='10'%3E%3Cpath d='M1 4l4 4 6-6' fill='none' stroke='white' stroke-width='2'/%3E%3C/svg%3E") center no-repeat;
}

.message { display: flex; flex-direction: column; height: 34px; padding: 0 14px; line-height: 17px; color: #000; }
.status {
  display: grid;
  grid-template-columns: 625px 85px 192px 309px 222px 68px 1fr;
  align-items: center;
  height: 22px;
  padding: 2px 0 0 5px;
  background: #fafafa;
  white-space: nowrap;
}
```
FILE: script.js
```js
const $ = id => document.getElementById(id);

// Grid dots, snapped to whole pixels
let dots = "";
for (let r = 0; r < 20; r++)
  for (let c = 0; c < 38; c++)
    dots += `M${Math.floor(111.5 + c * 42.22)} ${Math.floor(175.5 + r * 42.21)}.500h1`;
$("grid").setAttribute("d", dots);

// Hatched border of the copper zone
let ticks = "";
for (let x = 624; x < 1530; x += 12) {
  const t = (x - 622) / 928;
  ticks += `M${x + 2} ${274 - 5 * t}l9 -6M${x} ${867 - 12 * t}l9 -6`;
}
for (let y = 278; y < 862; y += 9) {
  const t = (y - 268) / 599;
  ticks += `M${622.5 - 4 * t} ${y}l9 -6`;
  if (y < 850) ticks += `M${1541 - 11 * t} ${y}l9 -6`;
}
$("hatch").setAttribute("d", ticks);

// x, y, pad radius, hole radius, kind, number, net
const pads = [
  [1112, 526, 14, 8, "o", "3", "v-"], [1154, 526, 14, 8, "o", "2", "GND"], [1196, 526, 14, 8, "s", "1", "v+"],
  [1107, 640, 13, 7, "o", "4", "v-"], [1150, 640, 13, 7, "o", "3", "GND"], [1192, 640, 13, 7, "o", "2", ""], [1234, 640, 13, 7, "s", "1", "x"],
  [1107, 766, 13, 7, "o", "5", "x"], [1150, 766, 13, 7, "o", "6", ""], [1192, 766, 13, 7, "o", "7", "v+"], [1234, 766, 13, 7, "o", "8", "x"],
  [1313, 674, 14, 8, "o", "2", "GND"], [1313, 716, 14, 8, "s", "1", ""],
  [842, 678, 14, 8, "s", "1", ""], [842, 720, 14, 8, "o", "2", "GND"],
  [981, 585, 12, 6, "h", "1", ""], [1023, 585, 12, 6, "r", "2", ""],
  [939, 673, 12, 6, "h", "1", ""], [981, 673, 12, 6, "r", "2", ""]
];
$("pads").innerHTML = pads.map(([x, y, r, h, kind, num, net]) => {
  let s = "";
  if (kind === "s") s += `<rect class="pad" x="${x - r}" y="${y - r}" width="${2 * r}" height="${2 * r}"/><rect class="ring" x="${x - r - 3.5}" y="${y - r - 3.5}" width="${2 * r + 7}" height="${2 * r + 7}" rx="2"/>`;
  else if (kind === "h") s += `<circle class="pad" cx="${x}" cy="${y}" r="15" stroke="#fff" stroke-width="2"/><circle cx="${x}" cy="${y}" r="13" fill="none" stroke="#e6e6e6" stroke-width="2"/>`;
  else s += `<circle class="pad" cx="${x}" cy="${y}" r="${r}"/><circle class="ring" cx="${x}" cy="${y}" r="${kind === "r" ? 15 : 16.5}"/>`;
  s += `<circle class="hole" cx="${x}" cy="${y}" r="${h}"/><text class="padtext" x="${x}" y="${y - 4}">${num}</text>`;
  s += net ? `<text class="padtext" x="${x}" y="${y + 9}">${net}</text>` : `<path d="M${x - 10} ${y + 6}h21" stroke="#fff" stroke-width="2" stroke-dasharray="3 1 2 1" opacity=".7"/>`;
  return s;
}).join("");

const layers = [
  ["F.Cu", "#c83434"], ["B.Cu", "#4d7fc4"], ["F.Adhesive", "#840084"], ["B.Adhesive", "#000084"],
  ["F.Paste", "#a39490"], ["B.Paste", "#00b3b3"], ["F.Silkscreen", "#f2eda1"], ["B.Silkscreen", "#e8b2a7"],
  ["F.Mask", "#573178"], ["B.Mask", "#027176"], ["User.Drawings", "#c2c2c2"], ["User.Comments", "#5994dc"],
  ["User.Eco1", "#b4dbd2"], ["User.Eco2", "#d8c852"], ["Edge.Cuts", "#d0d2cd"], ["Margin", "#ff26e2"],
  ["F.Courtyard", "#ff26e2"], ["B.Courtyard", "#26e9ff"], ["F.Fab", "#afafaf"], ["B.Fab", "#585d84"],
  ["User.1", "#c2c2c2"], ["User.2", "#5994dc"], ["User.3", "#b4dbd2"], ["User.4", "#d8c852"], ["User.5", "#c2c2c2"],
  ["User.6", "#5994dc"], ["User.7", "#b4dbd2"], ["User.8", "#d8c852"], ["User.9", "#e8b2a7"]
];
$("layers").innerHTML = layers.map(([name, color]) =>
  `<li><span class="swatch" style="background:${color}"></span><button title="Toggle ${name}"><svg><use href="#eye"/></svg></button>${name}</li>`).join("");
```
